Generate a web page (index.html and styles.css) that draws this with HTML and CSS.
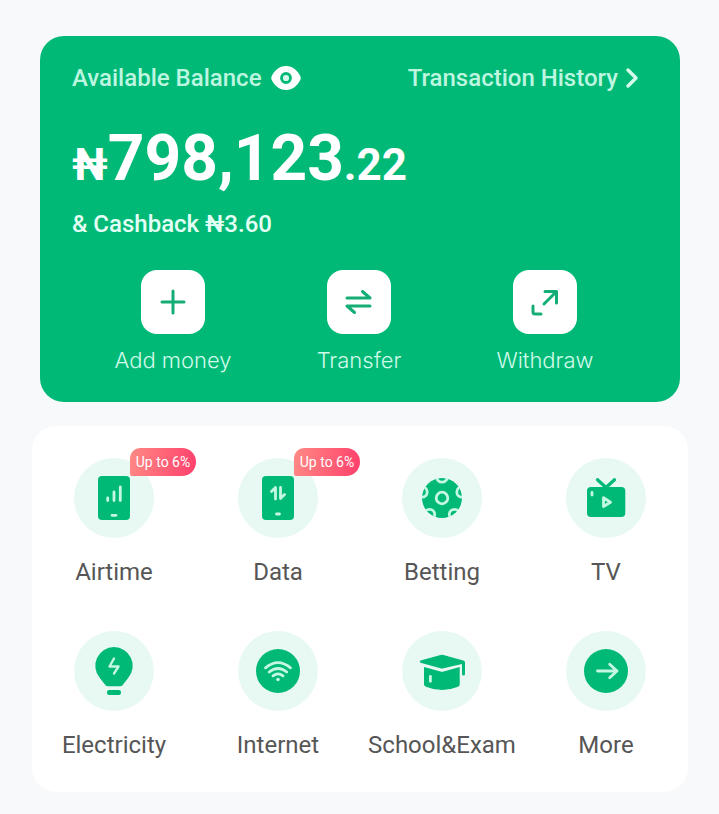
FILE: index.html
```html
<!DOCTYPE html>
<html lang="en">
<head>
<meta charset="utf-8">
<meta name="viewport" content="width=device-width, initial-scale=1">
<title>Wallet</title>
<link rel="stylesheet" href="styles.css">
</head>
<body>
<main class="page">
  <section class="balance-card">
    <div class="card-header">
      <div class="available">
        <span>Available Balance</span>
        <button class="eye" type="button" aria-label="Hide balance">
          <svg width="30" height="24" viewBox="0 0 30 24"><path d="M15 0C22 0 26.500 5 29 9.500Q30.500 12 29 14.500C26.500 19 22 24 15 24C8 24 3.500 19 1 14.500Q-.5 12 1 9.500C3.500 5 8 0 15 0Z" fill="#fff"/><circle cx="15" cy="12" r="4.500" fill="#d5fbec" stroke="#01b976" stroke-width="2.800"/></svg>
        </button>
      </div>
      <a class="history" href="#">
        <span>Transaction History</span>
        <svg width="12" height="20" viewBox="0 0 12 20"><path d="M2 2L10 10L2 18" fill="none" stroke="#d5fbec" stroke-width="3.400" stroke-linecap="round" stroke-linejoin="round"/></svg>
      </a>
    </div>
    <p class="amount"><span class="small">₦</span>798,123<span class="small">.22</span></p>
    <p class="cashback">&amp; Cashback ₦3.60</p>
    <div class="actions">
      <button class="action" type="button">
        <svg class="tile" viewBox="0 0 64 64"><path d="M32 21V43M21 32H43"/></svg>
        <span>Add money</span>
      </button>
      <button class="action" type="button">
        <svg class="tile" viewBox="0 0 64 64"><path d="M20 28H43L35.500 21.500M43 36H20L27.500 42.500"/></svg>
        <span>Transfer</span>
      </button>
      <button class="action" type="button">
        <svg class="tile" viewBox="0 0 64 64"><path d="M31 34L43.500 21.500M32 21.500H43.500V33M20 36V42Q20 44 22 44H28"/></svg>
        <span>Withdraw</span>
      </button>
    </div>
  </section>

  <nav class="services" aria-label="Services">
    <a class="service" href="#">
      <span class="icon">
        <svg viewBox="0 0 80 80"><rect class="solid" x="24" y="18" width="32" height="44" rx="4"/><path class="line" d="M33.700 40V42.500M40 34V42.500M46.300 29V42.500M38 57.300H42"/></svg>
        <span class="badge">Up to 6%</span>
      </span>
      <span>Airtime</span>
    </a>
    <a class="service" href="#">
      <span class="icon">
        <svg viewBox="0 0 80 80"><rect class="solid" x="24" y="18" width="32" height="44" rx="4"/><path class="line" d="M33.500 33.500L37.500 29.500V41M42.500 29.500V40.500L46.500 36.500M38.500 56H41.500"/></svg>
        <span class="badge">Up to 6%</span>
      </span>
      <span>Data</span>
    </a>
    <a class="service" href="#">
      <span class="icon">
        <svg viewBox="0 0 80 80"><clipPath id="ball"><circle cx="40" cy="40" r="20.300"/></clipPath><g clip-path="url(#ball)"><circle class="solid" cx="40" cy="40" r="20"/><g class="line"><circle cx="40" cy="40" r="5.800"/><circle cx="40" cy="19" r="5.200"/><circle cx="20" cy="34" r="5.200"/><circle cx="60" cy="34" r="5.200"/><circle cx="27.500" cy="56.500" r="5.200"/><circle cx="52.500" cy="56.500" r="5.200"/></g></g></svg>
      </span>
      <span>Betting</span>
    </a>
    <a class="service" href="#">
      <span class="icon">
        <svg viewBox="0 0 80 80"><path d="M31.500 21.700L40 29.500L48.500 21.700" fill="none" stroke="#01b976" stroke-width="3.200" stroke-linecap="round"/><rect class="solid" x="21" y="29" width="38.300" height="30" rx="4"/><path class="line" d="M26 34.500V37M37.500 39.800V48.500L44.500 44.200Z"/></svg>
      </span>
      <span>TV</span>
    </a>
    <a class="service" href="#">
      <span class="icon">
        <svg viewBox="0 0 80 80"><path class="solid" d="M40 16A18.700 18.700 0 0 1 54.500 46.500L49.500 53Q48.300 55.300 46 55.300H34Q31.700 55.300 30.500 53L25.500 46.500A18.700 18.700 0 0 1 40 16Z"/><rect class="solid" x="33" y="59" width="14" height="5" rx="2.200"/><path class="line thin" d="M40 27.500L35.500 35.500H44.500L40 42.500"/></svg>
      </span>
      <span>Electricity</span>
    </a>
    <a class="service" href="#">
      <span class="icon">
        <svg viewBox="0 0 80 80"><circle class="solid" cx="40" cy="40" r="22"/><path class="line" d="M27.500 36.800Q40 26.500 52.500 36.800M31.200 41Q40 34 48.800 41M35 44.800Q40 41 45 44.800"/><circle cx="40" cy="48.500" r="1.800" fill="#c5f8e4"/></svg>
      </span>
      <span>Internet</span>
    </a>
    <a class="service" href="#">
      <span class="icon">
        <svg viewBox="0 0 80 80"><path class="solid" d="M18.500 29.500L38.500 24Q40 23.600 41.500 24L62 29.700Q63 30.200 63 31.500V43Q63 44.500 61.500 44.500T60 43V33L41.500 37.300Q40 37.700 38.500 37.300L18.500 31.700Q17 30.500 18.500 29.500Z"/><path class="solid" d="M22 36L38.500 40.500Q40 40.900 41.500 40.500L57.700 36V53.500Q57.700 55 56 55.700Q40 62.300 24 55.700Q22 55 22 53.500Z"/><path class="line" d="M28.400 45.300V50.300"/></svg>
      </span>
      <span>School&amp;Exam</span>
    </a>
    <a class="service" href="#">
      <span class="icon">
        <svg viewBox="0 0 80 80"><circle class="solid" cx="40" cy="40" r="22"/><path class="line" d="M31.500 40H51M43.700 33.300L51 40L43.700 46.700"/></svg>
      </span>
      <span>More</span>
    </a>
  </nav>
</main>
</body>
</html>
```
FILE: styles.css
```css
* {
  box-sizing: border-box;
}

body {
  margin: 0;
  background: #f8f9fb;
  font-family: Roboto, "Liberation Sans", sans-serif;
  font-size: 24px;
  line-height: 28px;
}

svg {
  display: block;
}

p {
  margin: 0;
}

a {
  color: inherit;
  text-decoration: none;
}

button {
  padding: 0;
  border: 0;
  background: none;
  color: inherit;
  font: inherit;
  cursor: pointer;
}

.page {
  display: flex;
  flex-direction: column;
  gap: 24px;
  padding: 36px 31px 22px 32px;
}

.balance-card {
  margin: 0 8px;
  padding: 28px 42px 28px 32px;
  border-radius: 24px;
  background: #01b976;
  color: #fff;
}

.card-header {
  display: flex;
  justify-content: space-between;
  color: #bdf6e0;
  font-weight: 500;
}

.available,
.history {
  display: flex;
  align-items: center;
  gap: 10px;
}

.history {
  gap: 8px;
}

.amount {
  margin-top: 35px;
  font-size: 64px;
  font-weight: 700;
  line-height: 1;
}

.small {
  font-size: 44px;
}

.cashback {
  margin-top: 19px;
  color: #e4fff5;
  font-weight: 500;
}

.actions {
  display: grid;
  grid-template-columns: repeat(3, 1fr);
  margin: 32px 0 0 8px;
}

.action {
  display: flex;
  flex-direction: column;
  align-items: center;
  gap: 12px;
  color: #d0faea;
  font-family: Inter, sans-serif;
  font-size: 22px;
  font-weight: 300;
}

.tile {
  width: 64px;
  height: 64px;
  border-radius: 16px;
  background: #fff;
  fill: none;
  stroke: #14ad75;
  stroke-width: 3;
  stroke-linecap: round;
  stroke-linejoin: round;
}

.services {
  display: grid;
  grid-template-columns: repeat(4, 1fr);
  row-gap: 45px;
  padding: 32px 0 33px;
  border-radius: 24px;
  background: #fff;
  color: #565656;
}

.service {
  display: flex;
  flex-direction: column;
  align-items: center;
  gap: 20px;
}

.icon {
  position: relative;
  width: 80px;
  height: 80px;
  border-radius: 50%;
  background: #e8f9f4;
}

.solid {
  fill: #01b976;
}

.line {
  fill: none;
  stroke: #c5f8e4;
  stroke-width: 2.8;
  stroke-linecap: round;
  stroke-linejoin: round;
}

.thin {
  stroke-width: 2.4;
}

.badge {
  position: absolute;
  top: -10px;
  left: 56px;
  width: 66px;
  border-radius: 10px 14px 14px 2px;
  background: linear-gradient(100deg, #ff8a84, #ff3f6c);
  color: #fff;
  font-size: 14px;
  font-weight: 400;
  text-align: center;
  white-space: nowrap;
}
```
